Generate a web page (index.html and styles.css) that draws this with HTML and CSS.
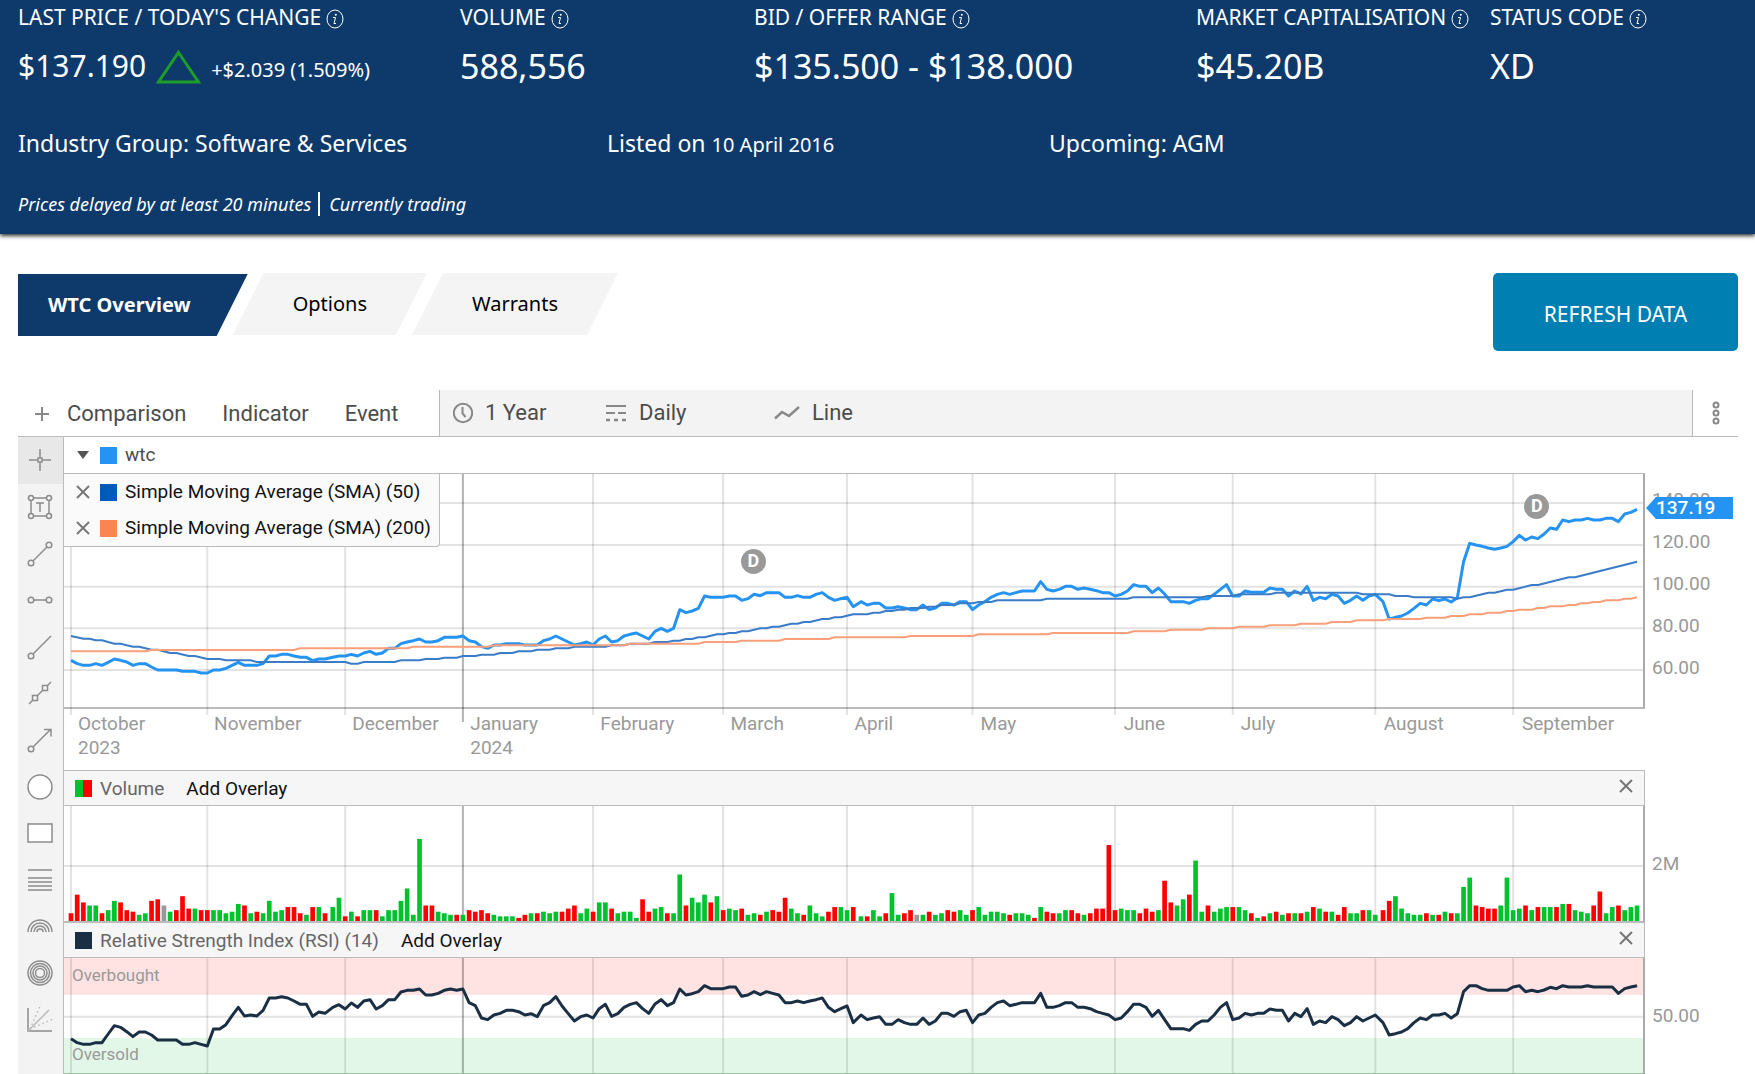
FILE: index.html
```html
<!DOCTYPE html>
<html lang="en">
<head>
<meta charset="utf-8">
<title>WTC Overview</title>
<link rel="stylesheet" href="styles.css">
</head>
<body>
<header class="quote">
  <dl class="metrics">
    <div>
      <dt>LAST PRICE / TODAY'S CHANGE <svg class="info" viewBox="0 0 18 20"><ellipse cx="9" cy="10" rx="8" ry="9"/><path d="M7 8.500h2.500L8 14.500h2"/><circle class="dot" cx="9.800" cy="5.800" r="1"/></svg></dt>
      <dd class="price"><span class="last">$137.190</span><svg class="up" viewBox="0 0 47 35"><path d="M23.500 3.500 43.500 33H3.500z"/></svg><span class="change">+$2.039 (1.509%)</span></dd>
    </div>
    <div>
      <dt>VOLUME <svg class="info" viewBox="0 0 18 20"><ellipse cx="9" cy="10" rx="8" ry="9"/><path d="M7 8.500h2.500L8 14.500h2"/><circle class="dot" cx="9.800" cy="5.800" r="1"/></svg></dt>
      <dd>588,556</dd>
    </div>
    <div>
      <dt>BID / OFFER RANGE <svg class="info" viewBox="0 0 18 20"><ellipse cx="9" cy="10" rx="8" ry="9"/><path d="M7 8.500h2.500L8 14.500h2"/><circle class="dot" cx="9.800" cy="5.800" r="1"/></svg></dt>
      <dd>$135.500 - $138.000</dd>
    </div>
    <div>
      <dt>MARKET CAPITALISATION <svg class="info" viewBox="0 0 18 20"><ellipse cx="9" cy="10" rx="8" ry="9"/><path d="M7 8.500h2.500L8 14.500h2"/><circle class="dot" cx="9.800" cy="5.800" r="1"/></svg></dt>
      <dd>$45.20B</dd>
    </div>
    <div>
      <dt>STATUS CODE <svg class="info" viewBox="0 0 18 20"><ellipse cx="9" cy="10" rx="8" ry="9"/><path d="M7 8.500h2.500L8 14.500h2"/><circle class="dot" cx="9.800" cy="5.800" r="1"/></svg></dt>
      <dd>XD</dd>
    </div>
  </dl>
  <div class="facts">
    <span>Industry Group: Software &amp; Services</span>
    <span>Listed on <span class="date">10 April 2016</span></span>
    <span>Upcoming: AGM</span>
  </div>
  <p class="notice"><em>Prices delayed by at least 20 minutes</em><em class="state">Currently trading</em></p>
</header>

<main class="page">
  <div class="actions">
    <nav class="tabs">
      <a class="tab active" href="#overview">WTC Overview</a>
      <a class="tab" href="#options">Options</a>
      <a class="tab" href="#warrants">Warrants</a>
    </nav>
    <button class="refresh" type="button">REFRESH DATA</button>
  </div>

  <section class="chart">
    <div class="toolbar">
      <div class="add">
        <svg class="plus" viewBox="0 0 16 16"><path d="M8 1v14M1 8h14"/></svg>
        <button type="button">Comparison</button>
        <button type="button">Indicator</button>
        <button type="button">Event</button>
      </div>
      <div class="view">
        <button class="period" type="button"><svg width="20" height="22" viewBox="0 0 20 22"><circle cx="10" cy="11" r="9.200"/><path d="M9.500 5v6.500l3 3.500" stroke-width="2"/></svg>1 Year</button>
        <button class="interval" type="button"><svg width="22" height="20" viewBox="0 0 22 20"><path d="M1 3h20" stroke-width="2"/><path d="M1 10h9M13 10h8" stroke-width="2"/><path d="M1 17h4M9 17h4M17 17h4" stroke-width="2.500"/></svg>Daily</button>
        <button class="style" type="button"><svg width="26" height="16" viewBox="0 0 26 16"><path d="M1 13.500 8 7l7 4L25 2" stroke-width="2.500"/></svg>Line</button>
      </div>
      <button class="more" type="button" aria-label="More"><svg width="8" height="26" viewBox="0 0 8 26"><circle cx="4" cy="5" r="2.500"/><circle cx="4" cy="13" r="2.500"/><circle cx="4" cy="21" r="2.500"/></svg></button>
    </div>

    <div class="body">
      <div class="tools">
        <button class="on" type="button" aria-label="Crosshair"><svg viewBox="0 0 26 26"><path d="M13 2v9M13 15v9M2 13h9M15 13h9"/><rect x="11" y="11" width="4" height="4"/></svg></button>
        <button type="button" aria-label="Text"><svg viewBox="0 0 26 26"><path d="M7 4h12M7 22h12M4 7v12M22 7v12M9 9h8M13 9v9"/><g class="knob"><circle cx="4" cy="4" r="2.500"/><circle cx="22" cy="4" r="2.500"/><circle cx="4" cy="22" r="2.500"/><circle cx="22" cy="22" r="2.500"/></g></svg></button>
        <button type="button" aria-label="Segment"><svg viewBox="0 0 26 26"><path d="M6 20 20 6"/><circle class="knob" cx="4" cy="22" r="2.800"/><circle class="knob" cx="22" cy="4" r="2.800"/></svg></button>
        <button type="button" aria-label="Horizontal line"><svg viewBox="0 0 26 26"><path d="M7 13h12"/><circle class="knob" cx="4" cy="13" r="2.800"/><circle class="knob" cx="22" cy="13" r="2.800"/></svg></button>
        <button type="button" aria-label="Ray"><svg viewBox="0 0 26 26"><path d="M6 20 24 2"/><circle class="knob" cx="4" cy="22" r="2.800"/></svg></button>
        <button type="button" aria-label="Line"><svg viewBox="0 0 26 26"><path d="M2 24 24 2"/><rect class="knob" x="5.500" y="15.500" width="5" height="5"/><rect class="knob" x="15.500" y="5.500" width="5" height="5"/></svg></button>
        <button type="button" aria-label="Arrow"><svg viewBox="0 0 26 26"><path d="M6 20 24 2M17 2.500h7v7"/><circle class="knob" cx="4" cy="22" r="2.800"/></svg></button>
        <button type="button" aria-label="Ellipse"><svg viewBox="0 0 26 26"><circle cx="13" cy="13" r="12" fill="#fff"/></svg></button>
        <button type="button" aria-label="Rectangle"><svg viewBox="0 0 26 26"><rect x="1" y="4" width="24" height="18" fill="#fff"/></svg></button>
        <button type="button" aria-label="Retracement"><svg viewBox="0 0 26 26"><path d="M1 3h24M1 11h24M1 15h24M1 19h24M1 23h24"/></svg></button>
        <button type="button" aria-label="Arcs"><svg viewBox="0 0 26 26"><path d="M1 19a12 12 0 0 1 24 0M4 19a9 9 0 0 1 18 0M7 19a6 6 0 0 1 12 0M10 19a3 3 0 0 1 6 0"/></svg></button>
        <button type="button" aria-label="Circles"><svg viewBox="0 0 26 26"><circle cx="13" cy="13" r="12"/><circle cx="13" cy="13" r="9.500"/><circle cx="13" cy="13" r="7"/><circle cx="13" cy="13" r="4.500"/></svg></button>
        <button type="button" aria-label="Fan"><svg viewBox="0 0 26 26"><path d="M1 1v23h24"/><path class="faint" d="M1 24 22 3"/><path class="faint" stroke-dasharray="1.500 3" d="M3 22 14-3M3 22 26 12"/></svg></button>
      </div>

      <div class="panels">
        <div class="legend">
          <svg class="caret" viewBox="0 0 12 8"><path d="M0 0h12L6 8z"/></svg>
          <span class="swatch price-color"></span><span>wtc</span>
        </div>

        <div class="panel">
          <div class="plot">
            <svg class="graph tall" id="price" viewBox="0 0 4740 699" preserveAspectRatio="none"></svg>
            <span class="event march">D</span>
            <span class="event september">D</span>
            <div class="overlays">
              <div><button type="button" aria-label="Remove"><svg class="cross" viewBox="0 0 14 14"><path d="m1 1 12 12M13 1 1 13"/></svg></button><span class="swatch sma50-color"></span>Simple Moving Average (SMA) (50)</div>
              <div><button type="button" aria-label="Remove"><svg class="cross" viewBox="0 0 14 14"><path d="m1 1 12 12M13 1 1 13"/></svg></button><span class="swatch sma200-color"></span>Simple Moving Average (SMA) (200)</div>
            </div>
          </div>
          <div class="axis scale">
            <span>140.00</span><span>120.00</span><span>100.00</span><span>80.00</span><span>60.00</span>
            <strong class="tag">137.19</strong>
          </div>
        </div>
        <div class="months">
          <span>October<br>2023</span><span>November</span><span>December</span><span>January<br>2024</span><span>February</span><span>March</span><span>April</span><span>May</span><span>June</span><span>July</span><span>August</span><span>September</span>
        </div>

        <div class="title first">
          <span class="swatch split"></span><span class="name">Volume</span>
          <button type="button">Add Overlay</button>
          <button class="close" type="button" aria-label="Close"><svg class="cross" viewBox="0 0 14 14"><path d="m1 1 12 12M13 1 1 13"/></svg></button>
        </div>
        <div class="panel">
          <div class="plot"><svg class="graph" id="volume" viewBox="0 0 4740 345" preserveAspectRatio="none"></svg></div>
          <div class="axis center">2M</div>
        </div>

        <div class="title">
          <span class="swatch rsi-color"></span><span class="name">Relative Strength Index (RSI) (14)</span>
          <button type="button">Add Overlay</button>
          <button class="close" type="button" aria-label="Close"><svg class="cross" viewBox="0 0 14 14"><path d="m1 1 12 12M13 1 1 13"/></svg></button>
        </div>
        <div class="panel">
          <div class="plot rsi-plot"><svg class="graph" id="rsi" viewBox="0 0 4740 345" preserveAspectRatio="none"></svg>
            <span class="zone high">Overbought</span><span class="zone low">Oversold</span>
          </div>
          <div class="axis center">50.00</div>
        </div>
      </div>
    </div>
  </section>
</main>
<script src="chart.js"></script>
</body>
</html>
```
FILE: styles.css
```css
* { box-sizing: border-box; }
body { margin: 0; background: #fff; color: #000; font-family: "Noto Sans", "Open Sans", sans-serif; overflow-x: hidden; }
button { margin: 0; padding: 0; border: 0; background: none; color: inherit; font: inherit; text-align: left; }
svg { display: block; flex: none; fill: none; }

/* Quote header */
.quote { position: relative; padding: 2px 0 15px 18px; background: #0d3a6b; color: #fff; box-shadow: 0 2px 4px rgba(0, 0, 0, .8); }
.metrics { display: grid; grid-template-columns: 442fr 294fr 442fr 294fr 265fr; margin: 0; }
.metrics dt { display: flex; align-items: center; gap: 5px; font-size: 21px; line-height: 30px; white-space: nowrap; }
.metrics dd { display: flex; align-items: center; margin: 12px 0 0; font-size: 34px; line-height: 44px; white-space: nowrap; }
.info { width: 18px; height: 20px; margin-top: 4px; stroke: #fff; }
.info .dot { fill: #fff; stroke: none; }
.metrics .last { font-size: 30px; }
.metrics .change { font-size: 20px; line-height: 28px; padding-top: 7px; }
.up { width: 47px; height: 35px; margin: 0 9px; stroke: #1e9e28; stroke-width: 3; }
.facts { display: grid; grid-template-columns: 589fr 442fr 706fr; margin-top: 38px; font-size: 23px; line-height: 34px; }
.facts .date { font-size: 20px; }
.notice { display: flex; align-items: center; margin: 27px 0 0; font-size: 18px; line-height: 30px; }
.state { margin-left: 7px; padding-left: 9px; border-left: 2px solid #fff; line-height: 24px; }

/* Tabs and refresh */
.page { padding: 39px 17px 0 18px; }
.actions { display: flex; justify-content: space-between; align-items: flex-start; }
.tabs { display: flex; }
.tab { height: 62px; margin-left: -15px; padding: 0 60px; background: #f4f4f4; clip-path: polygon(31px 0, 100% 0, calc(100% - 31px) 100%, 0 100%); color: #000; font-size: 20px; line-height: 62px; text-decoration: none; }
.tab.active { margin: 1px 0 0; padding: 0 57px 0 30px; background: #0d3a6b; clip-path: polygon(0 0, 100% 0, calc(100% - 31px) 100%, 0 100%); color: #fff; font-weight: 700; }
.refresh { width: 245px; height: 78px; padding-top: 3px; border-radius: 5px; background: #007fb2; color: #fff; font-size: 21px; text-align: center; }

/* Chart toolbar */
.chart { margin-top: 39px; color: #4c4c4c; font-family: Roboto, "Liberation Sans", sans-serif; }
.toolbar { display: flex; height: 47px; border-bottom: 1px solid #bbb; font-size: 22px; line-height: 46px; }
.toolbar svg { stroke: #888; stroke-width: 2; }
.add { display: flex; align-items: center; gap: 36px; width: 422px; padding: 1px 0 0 16px; border-right: 1px solid #bbb; }
.plus { width: 16px; height: 16px; margin-right: -19px; }
.view { display: flex; flex: 1; padding-left: 13px; background: #f3f3f3; }
.view button { display: flex; align-items: center; gap: 12px; }
.period { width: 152px; }
.interval { width: 169px; }
.more { display: flex; align-items: center; justify-content: center; width: 46px; border-left: 1px solid #bbb; }

/* Drawing tools */
.body { display: grid; grid-template-columns: 46px 1fr; }
.tools { display: flex; flex-direction: column; padding-bottom: 32px; background: #f3f3f3; border-right: 1px solid #bbb; }
.tools button { display: flex; flex: 1; align-items: center; justify-content: center; padding-right: 2px; }
.tools .on { background: #e8e8e8; }
.tools svg { width: 26px; height: 26px; stroke: #8c8c8c; stroke-width: 1.5; overflow: visible; }
.knob { fill: #f3f3f3; }
.faint { stroke: #bbb; }

/* Panels */
.panels { min-width: 0; font-size: 19px; }
.legend { display: flex; align-items: center; height: 36px; margin-right: 93px; padding-left: 13px; line-height: 36px; }
.caret { width: 12px; height: 8px; margin-right: 11px; fill: #555; }
.swatch { flex: none; width: 17px; height: 17px; margin-right: 8px; }
.price-color { background: #2493f2; }
.sma50-color { background: #005ab9; }
.sma200-color { background: #f98454; }
.rsi-color { background: #1a2e44; }
.split { background: linear-gradient(90deg, #00c22d 50%, #f00 50%); }
.cross { width: 14px; height: 14px; stroke: #777; stroke-width: 2; }
.panel { display: grid; grid-template-columns: 1fr 93px; }
.plot { position: relative; min-width: 0; border-right: 2px solid #aaa; border-bottom: 2px solid #bbb; }
.legend + .panel .plot { border-top: 1px solid #bbb; }
.graph { width: 100%; height: 115px; overflow: visible; }
.tall { height: 233px; }
.graph path, .graph polyline { vector-effect: non-scaling-stroke; }
.grid { stroke: #000; stroke-opacity: .11; stroke-width: 2; }
.year { stroke: #000; stroke-opacity: .3; stroke-width: 2; }
.line { stroke-width: 3; stroke-linejoin: round; }
.wtc { stroke: #2493f2; }
.sma50 { stroke: #3b7cc9; stroke-width: 2; }
.sma200 { stroke: #fa9f7a; stroke-width: 2; }
.rsi { stroke: #1a2e44; }
.bar-r { fill: #f00; }
.bar-g { fill: #00c22d; }
.bar-n { fill: #999; }
.band-high { fill: #f00; fill-opacity: .11; }
.band-low { fill: #00b92d; fill-opacity: .11; }
.rsi-plot { border-bottom-color: #9fbba6; }

/* Items drawn over the plots */
.overlays { position: absolute; top: -1px; left: 0; width: 376px; padding-left: 12px; background: #fafafa; border: 1px solid #bbb; border-left: 0; border-radius: 0 0 4px 0; color: #111; line-height: 36px; white-space: nowrap; }
.overlays div { display: flex; align-items: center; }
.overlays button { margin-right: 10px; }
.event { position: absolute; width: 25px; height: 25px; border-radius: 50%; background: #999; color: #fff; font-size: 18px; font-weight: 700; line-height: 24px; text-align: center; }
.march { left: calc(43% - 2px); top: 75px; }
.september { left: calc(94% - 24px); top: 20px; }
.zone { position: absolute; left: 8px; color: #999; font-size: 17px; line-height: 20px; }
.high { top: 7px; }
.low { bottom: 9px; }

/* Axes */
.axis { padding-left: 7px; color: #999; font-size: 19px; }
.center { line-height: 115px; }
.scale { position: relative; display: flex; flex-direction: column; padding-top: 6px; }
.scale span { line-height: 42px; height: 42px; }
.tag { position: absolute; left: 1px; top: 24px; width: 87px; height: 22px; padding-left: 10px; background: #2493f2; clip-path: polygon(10px 0, 100% 0, 100% 100%, 10px 100%, 0 50%); color: #fff; font-weight: 500; line-height: 21px; }
.months { display: grid; grid-template-columns: 136fr 138fr 118fr 130fr 130fr 124fr 126fr 143fr 117fr 143fr 138fr 130fr; height: 61px; margin-right: 93px; padding: 3px 0 0 7px; color: #999; line-height: 24px; }
.months span { padding-left: 7px; }

/* Indicator titles */
.title { display: flex; align-items: center; height: 35px; margin-right: 93px; padding-left: 11px; background: #f6f6f6; border-right: 1px solid #bbb; border-bottom: 1px solid #bbb; color: #666; }
.title.first { height: 36px; border-top: 1px solid #bbb; }
.title .name { margin-right: 22px; }
.title button { color: #111; }
.title .close { margin: 0 11px 4px auto; }
```
FILE: chart.js
```js
const GAPS = [42, 127, 211];
const MONTHS = [0, 22, 44, 63, 84, 105, 125, 145, 168, 187, 210, 232];
const NEW_YEAR = 63;
const x = i => 21 + 18.6 * i + 4.65 * GAPS.filter(g => i >= g).length;

const price = [559,569,574,574,569,574,565,555,559,564,574,569,569,579,588,588,588,588,592,592,592,597,597,588,588,583,574,565,574,574,574,569,546,546,541,541,546,550,550,560,555,555,550,546,546,541,546,537,532,541,537,523,523,509,504,500,495,504,504,500,490,490,490,486,
500,504,518,523,513,513,509,509,509,513,513,513,500,495,486,495,504,513,509,504,513,495,486,504,500,486,481,477,486,495,472,463,472,463,407,416,411,403,366,370,370,370,366,366,379,374,361,365,356,356,356,370,370,365,370,370,361,356,370,379,374,
370,398,383,393,388,388,402,402,398,402,407,407,393,407,402,388,388,393,383,383,407,393,383,370,361,356,361,356,351,351,351,323,346,351,346,337,337,346,342,346,350,356,356,366,361,351,332,337,337,356,342,360,383,383,383,388,379,374,374,361,346,332,366,366,351,355,355,355,342,346,346,366,351,360,337,379,370,374,361,366,388,379,366,379,366,361,
383,435,430,426,417,403,388,393,375,380,375,384,371,263,208,213,217,222,226,222,217,203,184,198,189,194,180,162,166,138,143,138,138,133,138,138,133,133,143,120,115,106];

const sma50 = '0:486 2:494 3:494 4:499 5:499 7:509 8:509 10:518 11:518 13:527 14:527 16:537 17:537 19:546 20:546 22:555 24:555 25:559 29:559 30:564 44:564 45:569 46:569 47:564 52:564 53:559 56:559 57:555 59:555 60:551 62:551 63:546 65:546 66:542 68:542 69:537 71:537 72:532 74:532 75:527 77:527 78:523 80:523 81:518 86:518 87:514 89:514 90:509 93:509 94:504 96:504 97:500 98:500 99:495 100:495 101:490 102:490 104:481 105:481 106:477 107:477 108:472 109:472 111:463 112:463 113:458 114:458 116:449 117:449 118:444 119:444 121:435 122:435 123:430 124:430 126:421 128:421 129:416 130:416 131:411 132:411 133:407 134:407 135:402 137:402 138:398 139:398 140:393 142:393 143:388 145:388 146:384 148:384 149:379 156:379 157:374 170:374 171:370 182:370 183:366 187:366 188:361 193:361 194:356 207:356 208:361 212:361 213:366 215:366 216:370 222:370 223:374 224:370 225:370 228:356 229:356 231:347 232:347 235:333 236:333 241:310 242:310 252:263';

const sma200 = '0:532 12:532 13:528 36:528 37:523 54:523 55:518 67:518 68:514 89:514 90:509 101:509 102:504 107:504 108:500 114:500 115:495 122:495 123:490 134:490 135:486 145:486 146:481 157:481 158:477 170:477 171:472 176:472 177:467 182:467 183:463 187:463 188:458 192:458 193:454 197:454 198:449 202:449 203:444 206:444 207:439 211:439 212:435 217:435 218:431 221:431 222:426 224:426 225:421 227:421 228:416 230:416 231:411 232:411 233:407 235:407 236:402 237:402 238:397 240:397 241:393 242:393 243:388 244:388 245:384 246:384 247:379 249:379 250:374 251:374 252:370';

const rsi = [242,254,259,259,254,254,228,203,208,221,236,222,222,231,246,246,246,246,259,259,254,259,264,213,213,200,173,148,174,171,174,157,120,120,116,120,129,139,139,175,162,166,148,140,153,135,148,129,125,153,143,125,125,102,97,97,93,111,111,106,97,93,97,93,
134,143,180,185,171,166,157,157,161,171,167,176,143,134,116,144,167,189,176,171,180,152,139,175,167,148,139,134,152,166,138,125,143,134,93,111,107,101,83,92,92,92,87,87,115,111,101,110,101,106,111,134,134,129,134,129,125,120,148,161,152,
144,194,171,185,180,176,199,199,185,194,199,199,180,199,189,166,166,175,161,157,194,171,166,148,134,129,143,139,134,134,134,106,148,148,143,134,134,148,148,152,161,166,171,185,180,161,139,139,148,175,157,185,212,212,212,217,199,189,189,171,148,134,185,180,166,171,166,166,153,157,157,189,166,176,152,199,189,194,176,185,203,194,176,189,180,171,
194,231,227,222,212,194,180,185,171,171,166,180,167,101,83,83,92,97,97,97,97,87,83,101,97,101,96,88,92,83,87,87,87,83,87,87,87,87,106,92,87,83];

const volume = `r5 r17 r12 g10 g10 r5 g7 g13 r12 r7 r6 g4 g5 r13 r14 n10 g6 r7 r16 r8 g8 r7 r7 g7 g7 g5 g6 g11 r10 g5 r6 g5 g13 g6 g7 r9 r9 r5 g4 r9 g9 r5 g9 g15 r3 g6 r3 g7 g7 r7 g3 g7 g7 g13 g21 g4 g53 r10 r10 g6 g5 g4 r4 g4
r7 r6 r7 r5 g4 g3 g3 g3 r2 r4 g5 r5 g6 g5 g6 r6 r8 r10 g5 g8 r6 g12 g12 r8 g5 g6 g6 g2 r14 r6 g8 g9 r5 g5 g30 r10 g15 g12 g17 r12 g16 r7 g8 g7 r8 g4 g5 r4 g6 r7 r6 r15 g8 g5 r4 g10 g5 g3 r6 r9 g9
g7 r9 g3 r3 g7 g3 r5 g18 g4 r5 r7 n4 g4 r6 g4 g5 r7 r6 g7 g4 r7 g9 g4 g6 g6 g5 r4 g5 g5 g4 r2 g9 r6 r5 g5 g7 r7 r5 g4 r5 r8 r8 r49 r7 g8 g7 g7 r5 r8 r6 g7 r26 r12 g10 g14 r17 g39 g6 r10 g6 g8 g9 r9 g9 g7 r5 g2 r3 g5 r6 g4 r5 g5 r5 g6 r9 g8 r6 g6 r4 r9 g5 g5 r7 g7 g4
r7 r13 g16 g8 g5 g4 g4 r5 g4 r4 g6 r5 g5 g22 g28 r10 r9 r8 r8 g10 g28 g7 g8 r10 g7 r9 g9 g9 r9 g11 r11 g7 g6 g5 r10 r19 g5 g9 r10 g7 g9 g10`.split(/\s+/);

const gridX = (bottom, tick, yearTick) => MONTHS.map(m => {
  const isYear = m === NEW_YEAR;
  return `<path class="${isYear ? 'year' : 'grid'}" d="M${x(m)} 0V${bottom + (isYear ? yearTick : tick)}"/>`;
}).join('');
const gridY = rows => rows.map(y => `<path class="grid" d="M0 ${y}H4740"/>`).join('');
const line = (cls, points) => `<polyline class="line ${cls}" points="${points.join(' ')}"/>`;
const full = values => values.map((v, i) => `${x(i)},${v}`);
const sparse = text => text.split(' ').map(p => {
  const [i, v] = p.split(':').map(Number);
  return `${x(i)},${v}`;
});

document.getElementById('price').innerHTML =
  gridX(699, 24, 45) + gridY([87, 213, 338, 463, 588]) +
  line('wtc', full(price)) + line('sma50', sparse(sma50)) + line('sma200', sparse(sma200));

document.getElementById('volume').innerHTML =
  gridX(345, 0, 0) + gridY([180]) +
  volume.map((v, i) => {
    const h = v.slice(1) * 4.65;
    return `<rect class="bar-${v[0]}" x="${x(i) - 7}" y="${345 - h}" width="14" height="${h}"/>`;
  }).join('');

document.getElementById('rsi').innerHTML =
  gridX(345, 0, 0) + gridY([176]) +
  '<rect class="band-high" width="4740" height="111"/><rect class="band-low" y="240" width="4740" height="105"/>' +
  line('rsi', full(rsi));
```
